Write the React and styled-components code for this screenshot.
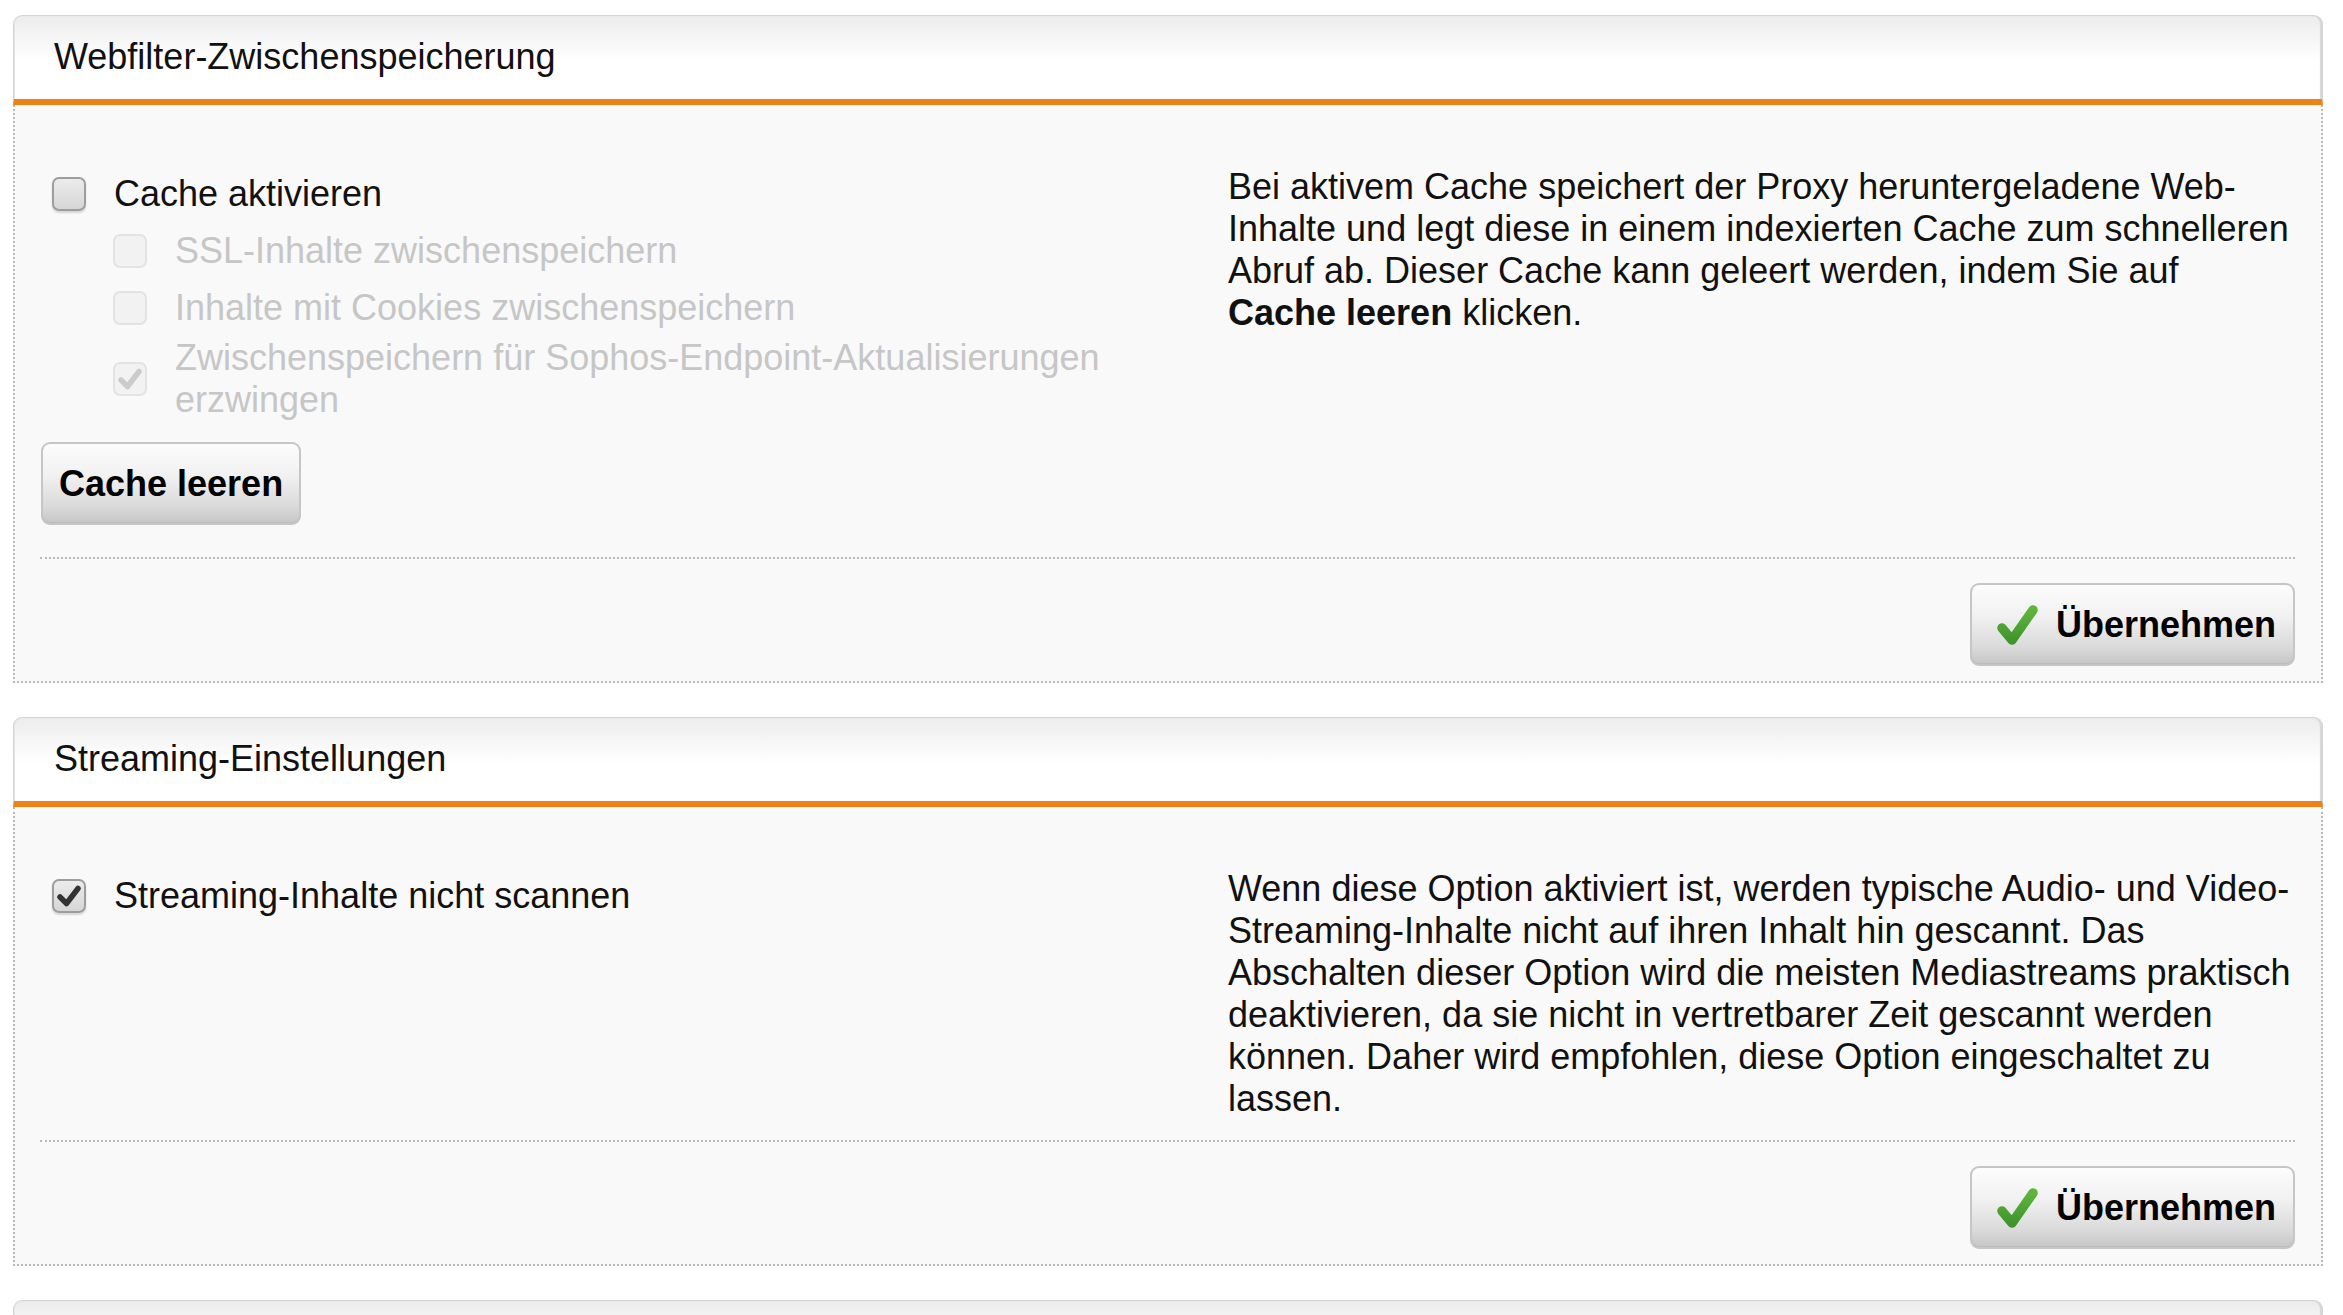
import React from 'react'
import styled, { createGlobalStyle } from 'styled-components'

const GlobalStyle = createGlobalStyle`
  html, body {
    margin: 0;
    background: #fff;
  }
  body {
    font-family: "Liberation Sans", Arial, sans-serif;
    color: #141414;
  }
`

const Page = styled.div`
  display: flex;
  flex-direction: column;
  gap: 34px;
  padding: 15px 20px 0 13px;
  height: 1315px;
  box-sizing: border-box;
  overflow: hidden;
`

const Panel = styled.section`
  display: flex;
  flex-direction: column;
`

const Header = styled.div`
  display: flex;
  align-items: center;
  height: 90px;
  box-sizing: border-box;
  padding: 0 0 2px 40px;
  border: 1px solid #d4d4d4;
  border-bottom: 6px solid #ec8316;
  border-radius: 9px 9px 0 0;
  background: linear-gradient(#ececec 0%, #f7f7f7 30%, #fff 55%);
  box-shadow: inset -2px 0 1px #d6d6d6, inset 1px 0 0 #e4e4e4;
  font-size: 36px;
  color: #111;
`

const Body = styled.div`
  background: #f9f9f9;
  border: 2px dotted #b9b9b9;
  border-top: none;
  padding: 61px 26px 0 25px;
`

const Content = styled.div`
  display: flex;
  padding-bottom: 20px;
`

const LeftCol = styled.div`
  flex: 0 0 1188px;
  display: flex;
  flex-direction: column;
  align-items: flex-start;
`

const RightCol = styled.p`
  flex: 1;
  margin: 0;
  font-size: 36px;
  line-height: 42px;
  color: #111;

  b {
    font-weight: bold;
  }
`

const Option = styled.label`
  display: flex;
  align-items: center;
  gap: 28px;
  min-height: ${p => p.$h || 57}px;
  padding-left: ${p => (p.$sub ? 73 : 12)}px;
  padding-right: 40px;
  font-size: 36px;
  line-height: 42px;
  color: ${p => (p.$disabled ? '#c6c6c6' : '#111')};
`

const Box = styled.span`
  flex: none;
  display: flex;
  align-items: center;
  justify-content: center;
  width: 34px;
  height: 34px;
  box-sizing: border-box;
  border-radius: 7px;
  border: 2px solid ${p => (p.$disabled ? '#e3e3e3' : '#9d9d9d')};
  background: ${p =>
    p.$disabled ? '#f2f2f2' : 'linear-gradient(#ececec, #d6d6d6)'};
  box-shadow: ${p => (p.$disabled ? 'none' : '0 2px 2px rgba(0,0,0,.14)')};
`

const Button = styled.button`
  display: inline-flex;
  align-items: center;
  gap: 17px;
  height: 83px;
  padding: ${p => (p.$icon ? '0 17px 0 25px' : '0 16px')};
  border: 2px solid #c6c6c6;
  border-radius: 9px;
  background: linear-gradient(#fcfcfc 0%, #f1f1f1 40%, #d9d9d9 80%, #c6c6c6 100%);
  box-shadow: inset 0 -1px 0 #bcbcbc;
  font-family: "Liberation Sans", Arial, sans-serif;
  font-size: 36px;
  font-weight: bold;
  color: #000;
  cursor: pointer;
`

const ClearButton = styled(Button)`
  margin: 20px 0 12px 1px;
`

const Divider = styled.div`
  border-top: 2px dotted #b9b9b9;
`

const Footer = styled.div`
  display: flex;
  justify-content: flex-end;
  padding: 24px 0 15px;
`

const Tick = ({ color }) => (
  <svg width="24" height="22" viewBox="0 0 24 22">
    <path
      d="M3 12 L9.5 18.5 L21 3.5"
      fill="none"
      stroke={color}
      strokeWidth="5.5"
      strokeLinecap="round"
      strokeLinejoin="round"
    />
  </svg>
)

const Checkbox = ({ checked, disabled }) => (
  <Box $disabled={disabled}>
    {checked && <Tick color={disabled ? '#cbcbcb' : '#333'} />}
  </Box>
)

const GreenCheck = () => (
  <svg width="42" height="44" viewBox="0 0 42 44">
    <defs>
      <linearGradient id="gc" x1="0" y1="0" x2="0" y2="1">
        <stop offset="0" stopColor="#5fb53c" />
        <stop offset="1" stopColor="#3f952b" />
      </linearGradient>
    </defs>
    <path
      d="M5 25 L15 37 L36 7"
      fill="none"
      stroke="url(#gc)"
      strokeWidth="9.5"
      strokeLinecap="round"
      strokeLinejoin="round"
    />
  </svg>
)

const ApplyButton = () => (
  <Footer>
    <Button $icon>
      <GreenCheck />
      Übernehmen
    </Button>
  </Footer>
)

const App = () => {
  return (
    <>
      <GlobalStyle />
      <Page>
        <Panel>
          <Header>Webfilter-Zwischenspeicherung</Header>
          <Body>
            <Content>
              <LeftCol>
                <Option $h={56}>
                  <Checkbox />
                  Cache aktivieren
                </Option>
                <Option $sub $disabled>
                  <Checkbox disabled />
                  SSL-Inhalte zwischenspeichern
                </Option>
                <Option $sub $disabled>
                  <Checkbox disabled />
                  Inhalte mit Cookies zwischenspeichern
                </Option>
                <Option $sub $disabled $h={86}>
                  <Checkbox disabled checked />
                  Zwischenspeichern für Sophos-Endpoint-Aktualisierungen erzwingen
                </Option>
                <ClearButton>Cache leeren</ClearButton>
              </LeftCol>
              <RightCol>
                Bei aktivem Cache speichert der Proxy heruntergeladene Web-Inhalte
                und legt diese in einem indexierten Cache zum schnelleren Abruf ab.
                Dieser Cache kann geleert werden, indem Sie auf <b>Cache leeren</b>{' '}
                klicken.
              </RightCol>
            </Content>
            <Divider />
            <ApplyButton />
          </Body>
        </Panel>

        <Panel>
          <Header>Streaming-Einstellungen</Header>
          <Body>
            <Content>
              <LeftCol>
                <Option $h={56}>
                  <Checkbox checked />
                  Streaming-Inhalte nicht scannen
                </Option>
              </LeftCol>
              <RightCol>
                Wenn diese Option aktiviert ist, werden typische Audio- und
                Video-Streaming-Inhalte nicht auf ihren Inhalt hin gescannt. Das
                Abschalten dieser Option wird die meisten Mediastreams praktisch
                deaktivieren, da sie nicht in vertretbarer Zeit gescannt werden
                können. Daher wird empfohlen, diese Option eingeschaltet zu lassen.
              </RightCol>
            </Content>
            <Divider />
            <ApplyButton />
          </Body>
        </Panel>

        <Panel>
          <Header />
        </Panel>
      </Page>
    </>
  )
}

export default App
